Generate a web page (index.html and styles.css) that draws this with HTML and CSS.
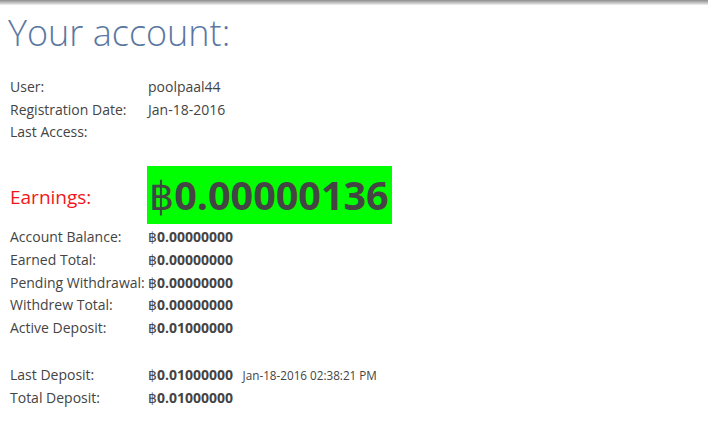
FILE: index.html
```html
<!DOCTYPE html>
<html>

<head>
  <meta name="viewport" content="width=device-width, initial-scale=1">
  <link rel="stylesheet" href="styles.css">
</head>

<body>
  <div class="topbar"></div>

  <div class="content">
    <h1>Your account:</h1>

    <table class="info">
      <tr><td class="label">User:</td><td>poolpaal44</td></tr>
      <tr><td class="label">Registration Date:</td><td>Jan-18-2016</td></tr>
      <tr><td class="label">Last Access:</td><td></td></tr>
    </table>

    <div class="earnings">
      <span class="earnings-label">Earnings:</span>
      <span class="earnings-box"><span class="coin">฿</span>0.00000136</span>
    </div>

    <table class="info">
      <tr><td class="label">Account Balance:</td><td><span class="coin">฿</span><b>0.00000000</b></td></tr>
      <tr><td class="label">Earned Total:</td><td><span class="coin">฿</span><b>0.00000000</b></td></tr>
      <tr><td class="label">Pending Withdrawal:</td><td><span class="coin">฿</span><b>0.00000000</b></td></tr>
      <tr><td class="label">Withdrew Total:</td><td><span class="coin">฿</span><b>0.00000000</b></td></tr>
      <tr><td class="label">Active Deposit:</td><td><span class="coin">฿</span><b>0.01000000</b></td></tr>
    </table>

    <table class="info deposits">
      <tr>
        <td class="label">Last Deposit:</td>
        <td><span class="coin">฿</span><b>0.01000000</b> <small class="date">Jan-18-2016 02:38:21 PM</small></td>
      </tr>
      <tr><td class="label">Total Deposit:</td><td><span class="coin">฿</span><b>0.01000000</b></td></tr>
    </table>
  </div>
</body>

</html>
```

FILE: styles.css
```css
html, body {
  margin: 0;
  padding: 0;
}

body {
  font-family: "Open Sans", "DejaVu Sans", sans-serif;
  font-size: 14px;
  color: #444;
  background: #fff;
  min-height: 433px;
}

.topbar {
  height: 5px;
  background: linear-gradient(#8c8c8c, #bdbdbd 50%, #f0f0f0);
}

.content {
  padding: 0 10px;
}

h1 {
  margin: 3px 0 0 -2px;
  font-weight: 300;
  font-size: 36px;
  line-height: 50px;
  color: #5a77a1;
}

.info {
  border-collapse: collapse;
}

.info td {
  padding: 0;
  height: 22.75px;
  vertical-align: middle;
  white-space: nowrap;
}

.info td.label {
  width: 138px;
}

h1 + .info {
  margin-top: 17px;
}

.earnings {
  display: flex;
  align-items: center;
  margin-top: 23px;
  margin-bottom: 1px;
}

.earnings-label {
  width: 137px;
  font-size: 19px;
  color: #f2151b;
  padding-top: 4px;
}

.earnings-box {
  background: #00ff00;
  font-size: 39.5px;
  font-weight: 700;
  line-height: 58px;
  padding: 0 3px 0 2px;
  color: #444;
}

.coin {
  font-weight: 400;
}

b {
  font-weight: 700;
}

.deposits {
  margin-top: 24px;
}

.date {
  font-size: 11.7px;
  margin-left: 6px;
}
```
